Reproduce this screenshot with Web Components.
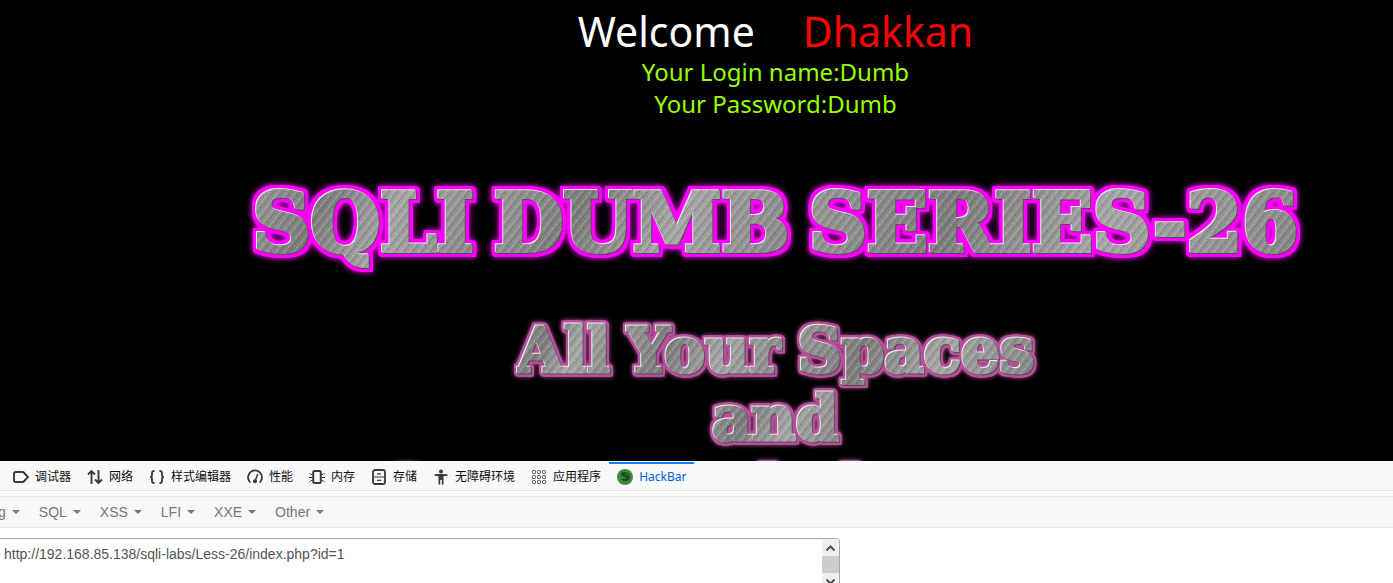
<!DOCTYPE html>
<html lang="zh-CN">
<head>
<meta charset="utf-8">
<title>Less-26</title>
<style>
html, body { margin: 0; height: 100%; }
body { font-family: "Liberation Sans", "Noto Sans CJK SC", sans-serif; background: #fff; overflow: hidden; }
</style>
</head>
<body>
<lab-app></lab-app>
<script>
const define = (name, html, setup) => customElements.define(name, class extends HTMLElement {
  connectedCallback() {
    if (this.shadowRoot) return;
    const t = document.createElement('template');
    t.innerHTML = html;
    this.attachShadow({ mode: 'open' }).append(t.content.cloneNode(true));
    if (setup) setup(this, this.shadowRoot);
  }
});

const ICONS = {
  debugger: '<path d="M2.500 3h7.200a1.500 1.500 0 0 1 1.100.5L15 8l-4.200 4.500a1.500 1.500 0 0 1-1.100.5H2.500A1.500 1.500 0 0 1 1 11.500v-7A1.500 1.500 0 0 1 2.500 3z" fill="none" stroke="#38383d" stroke-width="1.900"/>',
  network: '<path d="M4.500 15V2M1 5.500 4.500 2 8 5.500M11.500 1v13M8 10.500l3.500 3.500 3.500-3.500" fill="none" stroke="#38383d" stroke-width="1.900"/>',
  style: '<path d="M5.500 2H5C3.500 2 3 3 3 4v2c0 1-.5 2-1.800 2C2.500 8 3 9 3 10v2c0 1 .5 2 2 2h.5M10.500 2h.5c1.500 0 2 1 2 2v2c0 1 .5 2 1.800 2-1.300 0-1.800 1-1.800 2v2c0 1-.5 2-2 2h-.5" fill="none" stroke="#38383d" stroke-width="1.800"/>',
  perf: '<path d="M2.800 13A7 7 0 1 1 13.200 13" fill="none" stroke="#38383d" stroke-width="1.800" stroke-linecap="round"/><path d="M10.800 5 8.500 11" stroke="#38383d" stroke-width="1.500"/><circle cx="8" cy="12.300" r="2" fill="#38383d"/>',
  memory: '<rect x="4.200" y="2" width="7.600" height="12" rx="1.500" fill="none" stroke="#38383d" stroke-width="2"/><path d="M.5 4 2 5.500H3M0 8.500h3M.5 13 2 11.500H3M15.500 4 14 5.500H13M16 8.500h-3M15.500 13 14 11.500H13" fill="none" stroke="#38383d"/>',
  storage: '<rect x="2" y="1" width="12" height="14" rx="2" fill="none" stroke="#38383d" stroke-width="1.800"/><path d="M2 8h12M6 4.800h4M6 11.300h4" stroke="#38383d" stroke-width="1.200"/>',
  access: '<circle cx="8" cy="2.500" r="2" fill="#38383d"/><path d="M1.500 5.200 6 5h4l4.500.2v1.600L10.500 7.200v8.300H8.800V11H7.200v4.500H5.500V7.200l-4-.4z" fill="#38383d"/>',
  apps: '<g fill="none" stroke="#38383d" stroke-width="1"><rect x="1.500" y="1.500" width="3" height="3" rx="1"/><rect x="6.500" y="1.500" width="3" height="3" rx="1"/><rect x="11.500" y="1.500" width="3" height="3" rx="1"/><rect x="1.500" y="6.500" width="3" height="3" rx="1"/><rect x="6.500" y="6.500" width="3" height="3" rx="1"/><rect x="11.500" y="6.500" width="3" height="3" rx="1"/><rect x="1.500" y="11.500" width="3" height="3" rx="1"/><rect x="6.500" y="11.500" width="3" height="3" rx="1"/><rect x="11.500" y="11.500" width="3" height="3" rx="1"/></g>',
  hackbar: '<circle cx="8" cy="8" r="8" fill="#3f8a3a"/><path d="M4 4.500C6 2.500 10 2.500 12 5c2 3 .5 6.500-3 7.300C6.500 12.500 4.500 11 4 9.500c2 .6 4 .5 5.500-.5C7.500 8.500 5 7.500 4 4.500z" fill="#1d4a20"/><path d="M8 5c1.500-.5 3 .5 3 2" fill="none" stroke="#447a42"/>'
};

define('chrome-metal', `
<style>
:host { display: flex; justify-content: center; gap: var(--word-gap); white-space: nowrap;
  font-family: "DejaVu Serif", serif; font-weight: bold; filter:
  drop-shadow(-1px -1px 0 #eee) drop-shadow(1px 1px 0 #5a4a5a)
  drop-shadow(var(--spread) 0 0 var(--glow)) drop-shadow(calc(0px - var(--spread)) 0 0 var(--glow))
  drop-shadow(0 var(--spread) 0 var(--glow)) drop-shadow(0 calc(0px - var(--spread)) 0 var(--glow))
  drop-shadow(0 0 var(--spread) var(--glow)); }
::slotted(span) { -webkit-text-fill-color: transparent; -webkit-text-stroke: var(--weight) transparent;
  background: repeating-linear-gradient(128deg, #fff3 0 1px, #0000 1px 3px, #0002 3px 4px, #0000 4px 7px),
    linear-gradient(115deg, #999, #7d7d7d 30%, #a6a6a6 60%, #858585);
  -webkit-background-clip: text; background-clip: text; }
</style><slot></slot>`);

define('lab-stage', `
<style>
:host { display: block; overflow: hidden; background: #000; padding: 6px 0 0 158px; box-sizing: border-box; min-height: 0; }
.intro { font-family: "Noto Sans", "Open Sans", sans-serif; text-align: center; }
.welcome { display: flex; justify-content: center; gap: 48px; margin: 0; font-size: 41px; font-weight: 400; line-height: 50px; color: #fff; }
.name { color: #f00; }
.cred { margin: 0; font-size: 24px; line-height: 32px; color: #9f0; }
h1, h2 { margin: 0; }
h1 { --glow: #f0f; --spread: 3px; --weight: 4px; --word-gap: 20px; font-size: 80px; line-height: 90px; margin-top: 58px; }
h2 { --glow: #b8509c; --spread: 2px; --weight: 3px; --word-gap: 16px; font-size: 61px; line-height: 68px; margin-top: 49px; }
h2 chrome-metal:last-child { margin-top: 4px; }
</style>
<div class="intro">
<p class="welcome"><span>Welcome</span><span class="name">Dhakkan</span></p>
<p class="cred">Your Login name:Dumb</p>
<p class="cred">Your Password:Dumb</p>
</div>
<h1><chrome-metal><span>SQLI</span><span>DUMB</span><span>SERIES-26</span></chrome-metal></h1>
<h2><chrome-metal><span>All</span><span>Your</span><span>Spaces</span></chrome-metal>
<chrome-metal><span>and</span></chrome-metal>
<chrome-metal><span>Comments</span><span>belong</span><span>to</span><span>us</span></chrome-metal></h2>`);

define('tool-tab', `
<style>
:host { display: block; }
button { display: flex; align-items: center; gap: 6px; height: 28px; padding: 0 8px; border: 0; border-top: 2px solid transparent; background: none;
  color: #0c0c0d; font: 12px/16px "Noto Sans", "Noto Sans CJK SC", sans-serif; white-space: nowrap; }
:host([active]) button { color: #0060df; border-top-color: #0a84ff; }
svg { width: 16px; height: 16px; flex: none; }
</style>
<button type="button" role="tab"><svg viewBox="0 0 16 16" aria-hidden="true"></svg><slot></slot></button>`,
(el, root) => { root.querySelector('svg').innerHTML = ICONS[el.getAttribute('icon')]; });

define('payload-menu', `
<style>
:host { display: block; }
button { display: flex; align-items: center; gap: 6px; padding: 0 10px 0 9px; border: 0; background: none; color: #777;
  font: 14px/20px "Liberation Sans", sans-serif; }
i { border: 4px solid transparent; border-top-color: #777; border-bottom: 0; }
</style>
<button type="button" aria-haspopup="true"><slot></slot><i></i></button>`);

define('url-box', `
<style>
:host { display: flex; width: 840px; max-width: 100%; height: 64px; box-sizing: border-box; border: 1px solid #aaa; border-left: 0;
  border-radius: 0 4px 4px 0; overflow: hidden; box-shadow: inset 0 1px 1px #0001; }
textarea { flex: 1; border: 0; margin: 0; padding: 5px 4px; resize: none; outline: 0; overflow: hidden; background: none; color: #555;
  font: 14px/20px "Liberation Sans", sans-serif; }
.bar { display: flex; flex-direction: column; width: 17px; background: #f0f0f0; }
.bar button { display: grid; place-items: center; height: 17px; padding: 0; border: 0; background: #f0f0f0; }
.thumb { height: 17px; background: #cdcdcd; }
svg { width: 9px; height: 6px; }
path { fill: none; stroke: #505050; stroke-width: 2; }
</style>
<textarea aria-label="URL" spellcheck="false">http://192.168.85.138/sqli-labs/Less-26/index.php?id=1</textarea>
<div class="bar">
<button type="button" aria-label="Scroll up"><svg viewBox="0 0 9 6"><path d="M.5 5.500l4-4 4 4"/></svg></button>
<div class="thumb"></div>
<button type="button" aria-label="Scroll down"><svg viewBox="0 0 9 6"><path d="M.5.5l4 4 4-4"/></svg></button>
</div>`);

define('dev-panel', `
<style>
:host { display: block; height: 122px; overflow: hidden; background: #fff; }
.tabs { display: flex; padding: 1px 5px 0; background: #f9f9fa; border-bottom: 1px solid #e0e0e2; }
.menus { display: flex; align-items: center; height: 30px; margin: 5px 0 10px; background: #f8f8f8; border: 1px solid #e7e7e7; border-width: 1px 0; }
.menus payload-menu:first-child { margin-left: -11px; }
</style>
<div class="tabs" role="tablist">
<tool-tab icon="debugger">调试器</tool-tab><tool-tab icon="network">网络</tool-tab><tool-tab icon="style">样式编辑器</tool-tab><tool-tab icon="perf">性能</tool-tab><tool-tab icon="memory">内存</tool-tab><tool-tab icon="storage">存储</tool-tab><tool-tab icon="access">无障碍环境</tool-tab><tool-tab icon="apps">应用程序</tool-tab><tool-tab icon="hackbar" active>HackBar</tool-tab>
</div>
<nav class="menus">
<payload-menu>g</payload-menu><payload-menu>SQL</payload-menu><payload-menu>XSS</payload-menu><payload-menu>LFI</payload-menu><payload-menu>XXE</payload-menu><payload-menu>Other</payload-menu>
</nav>
<url-box></url-box>`);

define('lab-app', `
<style>
:host { display: flex; flex-direction: column; height: 100vh; }
lab-stage { flex: 1; }
dev-panel { flex: none; }
</style>
<lab-stage></lab-stage><dev-panel></dev-panel>`);
</script>
</body>
</html>
